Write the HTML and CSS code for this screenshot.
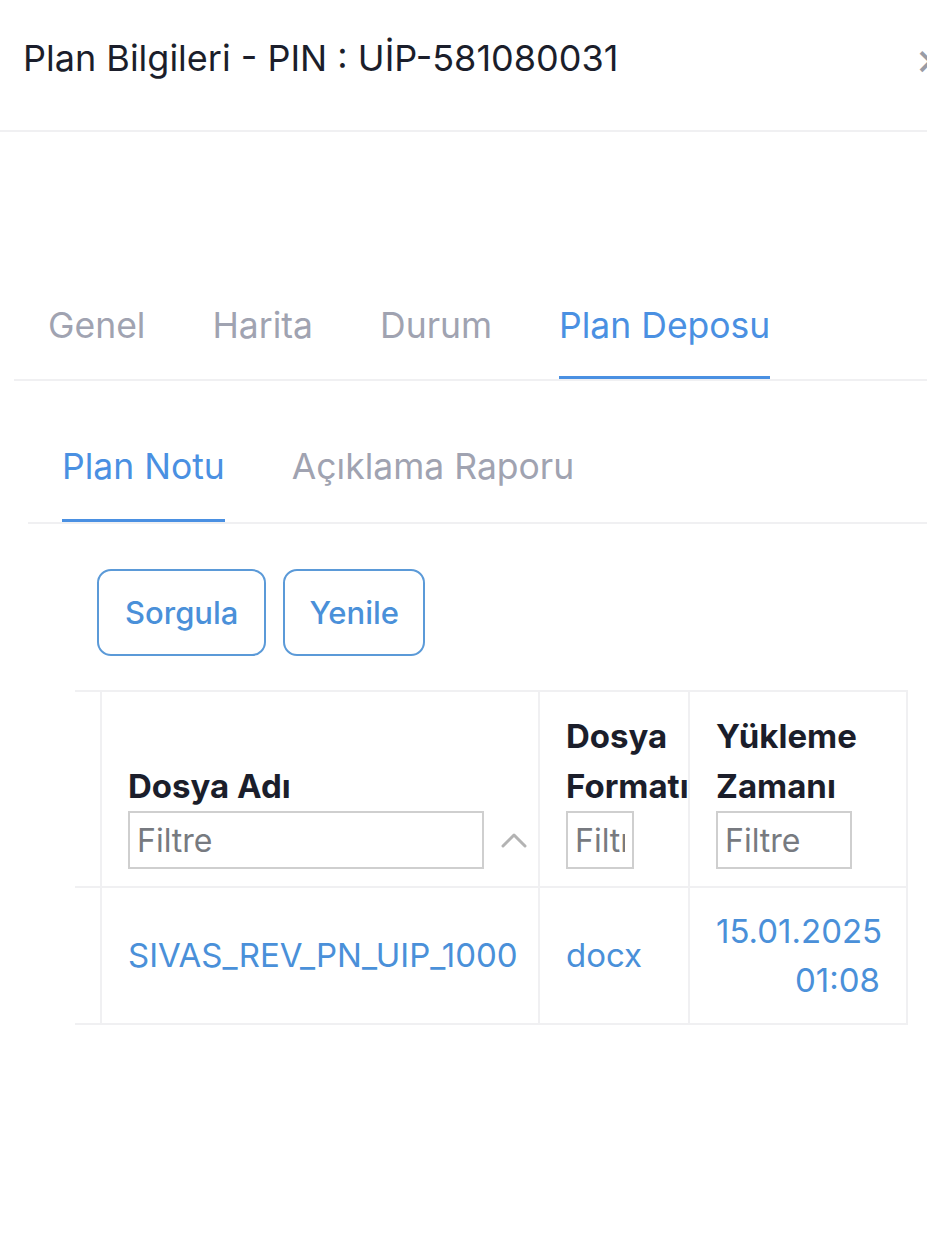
FILE: index.html
```html
<!DOCTYPE html>
<html lang="tr">
<head>
<meta charset="utf-8">
<title>Plan Bilgileri</title>
<link rel="stylesheet" href="styles.css">
</head>
<body>
<div class="modal">
  <header class="modal-header">
    <h1 class="modal-title">Plan Bilgileri - PIN : UİP-581080031</h1>
    <span class="modal-close">×</span>
  </header>

  <div class="modal-body">
    <nav class="tabs">
      <span class="tab">Genel</span>
      <span class="tab">Harita</span>
      <span class="tab">Durum</span>
      <span class="tab active">Plan Deposu</span>
    </nav>

    <nav class="subtabs">
      <span class="subtab active">Plan Notu</span>
      <span class="subtab">Açıklama Raporu</span>
    </nav>

    <div class="actions">
      <button class="btn">Sorgula</button>
      <button class="btn">Yenile</button>
    </div>

    <div class="table-wrap">
      <table class="grid">
        <thead>
          <tr>
            <th class="col-stub"></th>
            <th class="col-name">
              <div class="th-label">Dosya Adı</div>
              <div class="th-filter">
                <input class="filter filter-name" type="text" placeholder="Filtre">
                <svg class="sort-icon" viewBox="0 0 26 16" width="26" height="16"><path d="M2 14 L13 3 L24 14" fill="none" stroke="#b3b3b3" stroke-width="3" stroke-linecap="round" stroke-linejoin="round"/></svg>
              </div>
            </th>
            <th class="col-format">
              <div class="th-label">Dosya<br>Formatı</div>
              <div class="th-filter"><input class="filter filter-format" type="text" placeholder="Filtre"></div>
            </th>
            <th class="col-time">
              <div class="th-label">Yükleme<br>Zamanı</div>
              <div class="th-filter"><input class="filter filter-time" type="text" placeholder="Filtre"></div>
            </th>
          </tr>
        </thead>
        <tbody>
          <tr>
            <td class="col-stub"></td>
            <td class="cell-link">SIVAS_REV_PN_UIP_1000</td>
            <td class="cell-link">docx</td>
            <td class="cell-link cell-time">15.01.2025<br>01:08</td>
          </tr>
        </tbody>
      </table>
    </div>
  </div>
</div>
</body>
</html>
```

FILE: styles.css
```css
* { box-sizing: border-box; }

html, body {
  margin: 0;
  background: #ffffff;
  overflow: hidden;
}

body {
  font-family: Inter, "Noto Sans", sans-serif;
  color: #1b1e2b;
  width: 927px;
  height: 1236px;
}

/* header */
.modal-header {
  height: 132px;
  border-bottom: 2px solid #f0f0f2;
  display: flex;
  align-items: flex-start;
  padding: 32px 0 0 23px;
  position: relative;
}

.modal-title {
  margin: 0;
  font-size: 36px;
  font-weight: 400;
  line-height: 52px;
  color: #1b1e2b;
}

.modal-close {
  position: absolute;
  left: 915px;
  top: 33px;
  font-size: 46px;
  line-height: 50px;
  color: #9a9ca5;
}

/* main tabs */
.modal-body {
  padding-top: 170px;
}

.tabs {
  margin-left: 14px;
  padding-left: 34px;
  display: flex;
  gap: 67px;
  border-bottom: 2px solid #f0f0f2;
}

.tab {
  font-size: 35.5px;
  line-height: 48px;
  padding-bottom: 26px;
  color: #a0a3b1;
  border-bottom: 3px solid transparent;
}

.tab.active {
  color: #4a90e2;
  border-bottom-color: #4a90e2;
}

/* sub tabs */
.subtabs {
  margin: 62px 0 0 28px;
  padding-left: 34px;
  display: flex;
  gap: 67px;
  border-bottom: 2px solid #f0f0f2;
}

.subtab {
  font-size: 35.5px;
  line-height: 48px;
  padding-bottom: 28px;
  color: #a0a3b1;
  border-bottom: 3px solid transparent;
}

.subtab.active {
  color: #4a90e2;
  border-bottom-color: #4a90e2;
}

/* buttons */
.actions {
  display: flex;
  gap: 17px;
  margin: 45px 0 0 97px;
}

.btn {
  font-family: inherit;
  height: 87px;
  padding: 0 26px;
  border: 2px solid #5b9ad8;
  border-radius: 14px;
  background: #ffffff;
  color: #4a90d9;
  font-size: 31px;
  font-weight: 500;
}

.btn + .btn { padding: 0 24px; }

/* table */
.table-wrap {
  margin: 34px 0 0 75px;
  width: 833px;
}

.grid {
  border-collapse: collapse;
  width: 832px;
  table-layout: fixed;
}

.grid th,
.grid td {
  border: 2px solid #f0f0f2;
  padding: 0 26px;
  text-align: left;
}

.grid thead tr { height: 196px; }
.grid tbody tr { height: 137px; }

.grid .col-stub {
  width: 26px;
  padding: 0;
  border-left: none;
}
.col-name { width: 438px; }
.col-format { width: 150px; }
.col-time { width: 218px; }

.grid th {
  vertical-align: bottom;
  padding-bottom: 17px;
}

.th-label {
  font-size: 33px;
  font-weight: 700;
  line-height: 50px;
  color: #1b1e2b;
  white-space: nowrap;
}

.th-filter {
  display: flex;
  align-items: center;
}

.filter {
  flex-shrink: 0;
  height: 58px;
  border: 2px solid #cfcfcf;
  border-radius: 0;
  font-family: inherit;
  font-size: 32px;
  padding: 0 7px;
  color: #333;
  outline: none;
}

.filter::placeholder { color: #777a80; }

.filter-name { width: 356px; }
.filter-format { width: 68px; }
.filter-time { width: 136px; }

.sort-icon {
  flex-shrink: 0;
  margin-left: 17px;
}

.grid th.col-format,
.grid th.col-time { padding-right: 0; }

.cell-link {
  color: #4a90d9;
  font-size: 33px;
  line-height: 49px;
  vertical-align: middle;
  white-space: nowrap;
}

.grid .cell-time { text-align: right; }
```
